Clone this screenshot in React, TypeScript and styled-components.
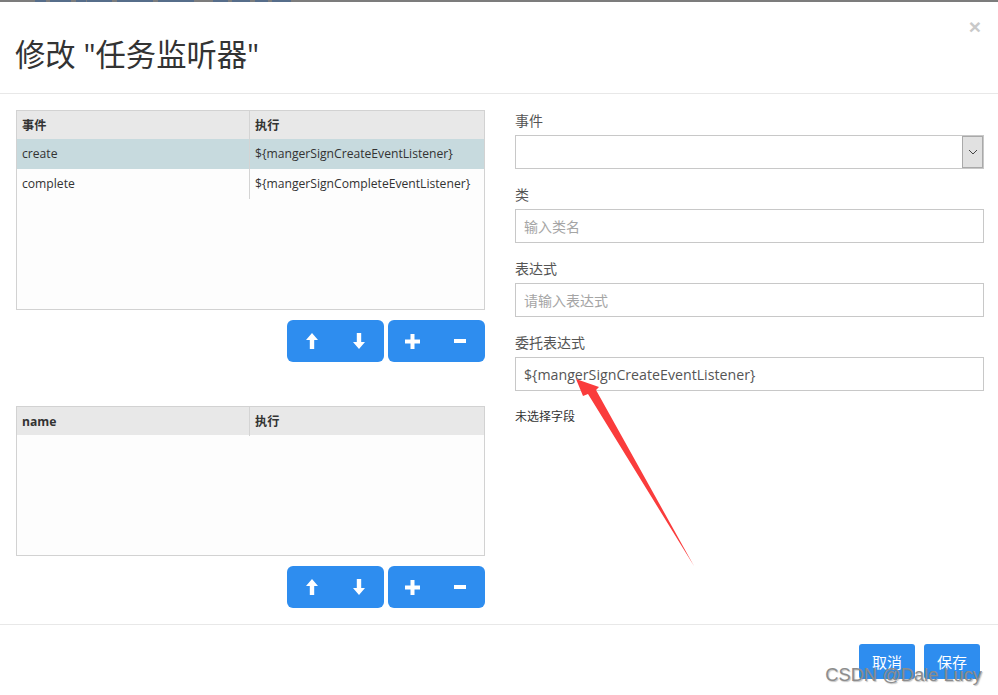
import React from 'react';
import styled, { createGlobalStyle } from 'styled-components';

const GlobalStyle = createGlobalStyle`
  html, body {
    margin: 0;
    padding: 0;
    background: #fff;
    overflow: hidden;
  }
  * {
    box-sizing: border-box;
  }
`;

const Page = styled.div`
  position: relative;
  width: 998px;
  height: 695px;
  overflow: hidden;
  background: #fff;
  color: #333;
  font-family: "Open Sans", "Noto Sans CJK SC", sans-serif;
`;

const BackdropStrip = styled.div`
  display: flex;
  height: 2px;
  background: #7c7c7c;
`;

const StripSegment = styled.span<{ $width: number; $gap: number }>`
  width: ${(p) => p.$width}px;
  margin-left: ${(p) => p.$gap}px;
  background: #566d8a;
`;

const Header = styled.header`
  display: flex;
  justify-content: space-between;
  height: 92px;
  padding: 15px 16px 0 15px;
  border-bottom: 1px solid #e8e8e8;
`;

const Title = styled.h1`
  margin: 18px 0 0;
  font-size: 30.3px;
  font-weight: 400;
  line-height: 40px;
  color: #333;
`;

const Close = styled.span`
  margin-right: 1px;
  font-family: "Liberation Sans", sans-serif;
  font-size: 21px;
  font-weight: 700;
  line-height: 20px;
  color: #c9c9c9;
`;

const Body = styled.main`
  display: grid;
  grid-template-columns: 469px 469px;
  column-gap: 30px;
  height: 530px;
  padding: 16px 0 0 16px;
`;

const LeftColumn = styled.section`
  display: flex;
  flex-direction: column;
`;

const TableBox = styled.div<{ $height: number; $gapTop?: number }>`
  height: ${(p) => p.$height}px;
  margin-top: ${(p) => p.$gapTop ?? 0}px;
  border: 1px solid #d2d2d2;
  background: #fdfdfd;
`;

const Row = styled.div<{ $kind?: 'head' | 'selected' }>`
  display: grid;
  grid-template-columns: 232px 1fr;
  height: ${(p) => (p.$kind === 'head' ? 28 : 30)}px;
  background: ${(p) =>
    p.$kind === 'head' ? '#e8e8e8' : p.$kind === 'selected' ? '#c7dade' : 'transparent'};
  font-size: 12.15px;
  font-weight: ${(p) => (p.$kind === 'head' ? 700 : 400)};
`;

const Cell = styled.div`
  padding-left: 5px;
  line-height: 29px;
  white-space: nowrap;
  color: #333;

  & + & {
    border-left: 1px solid #d4d4d4;
  }
`;

const ButtonBar = styled.div`
  display: flex;
  justify-content: flex-end;
  gap: 4px;
  margin-top: 10px;
`;

const ButtonGroup = styled.div`
  display: flex;
  width: 97px;
  height: 42px;
  padding: 0 1px;
  border-radius: 6px;
  background: #2e8def;
`;

const IconButton = styled.button`
  display: flex;
  flex: 1;
  align-items: center;
  justify-content: center;
  padding: 0;
  border: 0;
  background: transparent;
`;

const RightColumn = styled.section`
  display: flex;
  flex-direction: column;
`;

const Field = styled.div`
  height: 74px;
`;

const Label = styled.label`
  display: block;
  height: 25px;
  font-size: 14px;
  line-height: 22px;
  color: #555;
`;

const TextInput = styled.input`
  display: block;
  width: 469px;
  height: 34px;
  padding: 0 8px;
  border: 1px solid #c8c8c8;
  border-radius: 0;
  outline: 0;
  background: #fff;
  color: #555;
  font-family: inherit;
  font-size: 14.2px;

  &::placeholder {
    color: #a5a5a5;
    font-size: 14px;
    opacity: 1;
  }
`;

const SelectBox = styled.div`
  display: flex;
  justify-content: flex-end;
  width: 469px;
  height: 34px;
  border: 1px solid #c8c8c8;
  background: #fff;
`;

const SelectArrow = styled.span`
  display: flex;
  align-items: center;
  justify-content: center;
  width: 21px;
  height: 32px;
  border: 1px solid #a9a9a9;
  background: #e1e1e1;
`;

const Hint = styled.p`
  margin: 0;
  font-size: 12px;
  line-height: 22px;
  color: #333;
`;

const Footer = styled.footer`
  display: flex;
  justify-content: flex-end;
  gap: 9px;
  padding: 19px 18px 0 0;
  border-top: 1px solid #e8e8e8;
`;

const FooterButton = styled.button`
  width: 56px;
  height: 35px;
  padding: 0;
  border: 0;
  border-radius: 3px;
  background: #2e8def;
  color: #fff;
  font-family: inherit;
  font-size: 15px;
`;

const Annotation = styled.svg`
  position: absolute;
  left: 0;
  top: 0;
  pointer-events: none;
`;

const Watermark = styled.span`
  position: absolute;
  right: 16px;
  top: 663px;
  font-family: "Liberation Sans", sans-serif;
  font-size: 18.3px;
  line-height: 24px;
  color: #8c8c8c;
  text-shadow: 1px 1px 1px rgba(120, 120, 120, 0.45);
  white-space: nowrap;
`;

const ArrowUp = () => (
  <svg width="12" height="16" viewBox="0 0 12 16">
    <path d="M6 0 L12 7 L8.2 7 L8.2 16 L3.8 16 L3.8 7 L0 7 Z" fill="#fff" />
  </svg>
);

const ArrowDown = () => (
  <svg width="12" height="16" viewBox="0 0 12 16">
    <path d="M3.8 0 L8.2 0 L8.2 9 L12 9 L6 16 L0 9 L3.8 9 Z" fill="#fff" />
  </svg>
);

const Plus = () => (
  <svg width="15" height="15" viewBox="0 0 15 15">
    <path d="M5.5 0 H9.5 V5.5 H15 V9.5 H9.5 V15 H5.5 V9.5 H0 V5.5 H5.5 Z" fill="#fff" />
  </svg>
);

const Minus = () => (
  <svg width="12" height="4" viewBox="0 0 12 4">
    <rect width="12" height="4" fill="#fff" />
  </svg>
);

const Controls = () => (
  <ButtonBar>
    <ButtonGroup>
      <IconButton><ArrowUp /></IconButton>
      <IconButton><ArrowDown /></IconButton>
    </ButtonGroup>
    <ButtonGroup>
      <IconButton><Plus /></IconButton>
      <IconButton><Minus /></IconButton>
    </ButtonGroup>
  </ButtonBar>
);

const stripSegments = [
  [11, 35], [21, 4], [10, 5], [25, 1], [36, 5], [36, 5],
  [15, 19], [18, 4], [13, 5], [19, 4],
];

export default function App() {
  return (
    <Page>
      <GlobalStyle />
      <BackdropStrip>
        {stripSegments.map(([width, gap], i) => (
          <StripSegment key={i} $width={width} $gap={gap} />
        ))}
      </BackdropStrip>
      <Header>
        <Title>修改 "任务监听器"</Title>
        <Close>×</Close>
      </Header>
      <Body>
        <LeftColumn>
          <TableBox $height={200}>
            <Row $kind="head">
              <Cell>事件</Cell>
              <Cell>执行</Cell>
            </Row>
            <Row $kind="selected">
              <Cell>create</Cell>
              <Cell>{'${mangerSignCreateEventListener}'}</Cell>
            </Row>
            <Row>
              <Cell>complete</Cell>
              <Cell>{'${mangerSignCompleteEventListener}'}</Cell>
            </Row>
          </TableBox>
          <Controls />
          <TableBox $height={150} $gapTop={44}>
            <Row $kind="head">
              <Cell>name</Cell>
              <Cell>执行</Cell>
            </Row>
          </TableBox>
          <Controls />
        </LeftColumn>
        <RightColumn>
          <Field>
            <Label>事件</Label>
            <SelectBox>
              <SelectArrow>
                <svg width="10" height="6" viewBox="0 0 10 6">
                  <path d="M1 1 L5 5 L9 1" fill="none" stroke="#444" strokeWidth="1" />
                </svg>
              </SelectArrow>
            </SelectBox>
          </Field>
          <Field>
            <Label>类</Label>
            <TextInput placeholder="输入类名" readOnly />
          </Field>
          <Field>
            <Label>表达式</Label>
            <TextInput placeholder="请输入表达式" readOnly />
          </Field>
          <Field>
            <Label>委托表达式</Label>
            <TextInput value="${mangerSignCreateEventListener}" readOnly />
          </Field>
          <Hint>未选择字段</Hint>
        </RightColumn>
      </Body>
      <Footer>
        <FooterButton>取消</FooterButton>
        <FooterButton>保存</FooterButton>
      </Footer>
      <Annotation width="998" height="695" viewBox="0 0 998 695">
        <path d="M576 379 L599 387 L596 390 L694 566 L588 394 L583 396 Z" fill="#fa3c3c" />
      </Annotation>
      <Watermark>CSDN @Dale Lucy</Watermark>
    </Page>
  );
}
